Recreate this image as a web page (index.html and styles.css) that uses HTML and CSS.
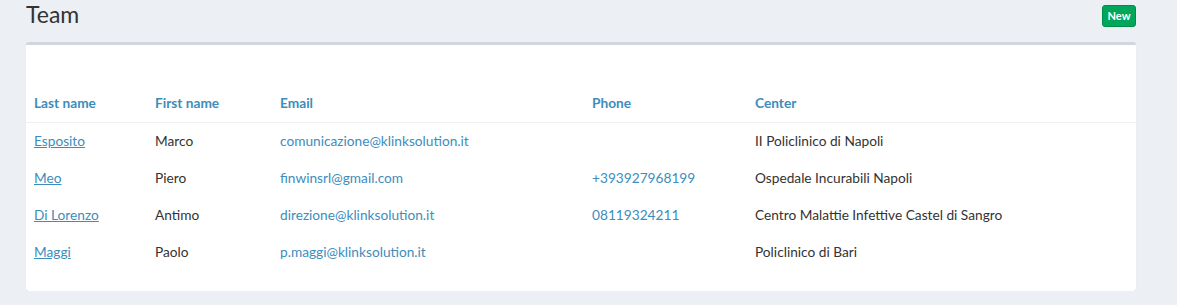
FILE: index.html
```html
<!DOCTYPE html>
<html>
<head>
<meta charset="utf-8">
<link rel="stylesheet" href="styles.css">
</head>
<body>
<div class="page">
  <div class="page-head">
    <h1 class="title">Team</h1>
    <a class="btn-new" href="#">New</a>
  </div>
  <div class="box">
    <table class="team">
      <colgroup>
        <col class="c-last"><col class="c-first"><col class="c-email"><col class="c-phone"><col class="c-center">
      </colgroup>
      <thead>
        <tr><th>Last name</th><th>First name</th><th>Email</th><th>Phone</th><th>Center</th></tr>
      </thead>
      <tbody>
        <tr><td><a class="name" href="#">Esposito</a></td><td>Marco</td><td><a class="plain" href="#">comunicazione@klinksolution.it</a></td><td></td><td>II Policlinico di Napoli</td></tr>
        <tr><td><a class="name" href="#">Meo</a></td><td>Piero</td><td><a class="plain" href="#">finwinsrl@gmail.com</a></td><td><a class="plain" href="#">+393927968199</a></td><td>Ospedale Incurabili Napoli</td></tr>
        <tr><td><a class="name" href="#">Di Lorenzo</a></td><td>Antimo</td><td><a class="plain" href="#">direzione@klinksolution.it</a></td><td><a class="plain" href="#">08119324211</a></td><td>Centro Malattie Infettive Castel di Sangro</td></tr>
        <tr><td><a class="name" href="#">Maggi</a></td><td>Paolo</td><td><a class="plain" href="#">p.maggi@klinksolution.it</a></td><td></td><td>Policlinico di Bari</td></tr>
      </tbody>
    </table>
  </div>
</div>
</body>
</html>
```
FILE: styles.css
```css
html, body {
  margin: 0;
  padding: 0;
  background: #ecf0f5;
  font-family: Lato, "Liberation Sans", sans-serif;
  font-size: 13.7px;
  color: #333;
}
.page {
  width: 1110px;
  margin-left: 26px;
}
.page-head {
  display: flex;
  justify-content: space-between;
  align-items: flex-start;
  height: 42px;
}
.title {
  margin: 0;
  padding-top: 0;
  font-weight: 400;
  font-size: 23px;
  line-height: 28px;
  color: #333;
}
.btn-new {
  margin-top: 5px;
  display: block;
  width: 34px;
  height: 22px;
  line-height: 20px;
  text-align: center;
  box-sizing: border-box;
  background: #00a65a;
  border: 1px solid #008d4c;
  border-radius: 3px;
  color: #fff;
  font-size: 11px;
  font-weight: 700;
  text-decoration: none;
}
.box {
  background: #fff;
  border-top: 3px solid #d2d6de;
  border-radius: 3px;
  box-shadow: 0 1px 1px rgba(0,0,0,0.1);
  padding: 39px 0 20px;
}
.team {
  width: 100%;
  border-collapse: collapse;
  table-layout: fixed;
}
.c-last { width: 121px; }
.c-first { width: 125px; }
.c-email { width: 312px; }
.c-phone { width: 163px; }
.team th, .team td {
  text-align: left;
  padding: 7px 8px 9px;
  height: 21px;
  line-height: 20px;
  white-space: nowrap;
}
.team th {
  padding: 8px 8px 9px;
  color: #3c8dbc;
  font-weight: 700;
  border-bottom: 1px solid #f0f0f0;
}
.team td {
  color: #333;
}
.team a {
  color: #3c8dbc;
}
.team a.plain {
  text-decoration: none;
}
```
